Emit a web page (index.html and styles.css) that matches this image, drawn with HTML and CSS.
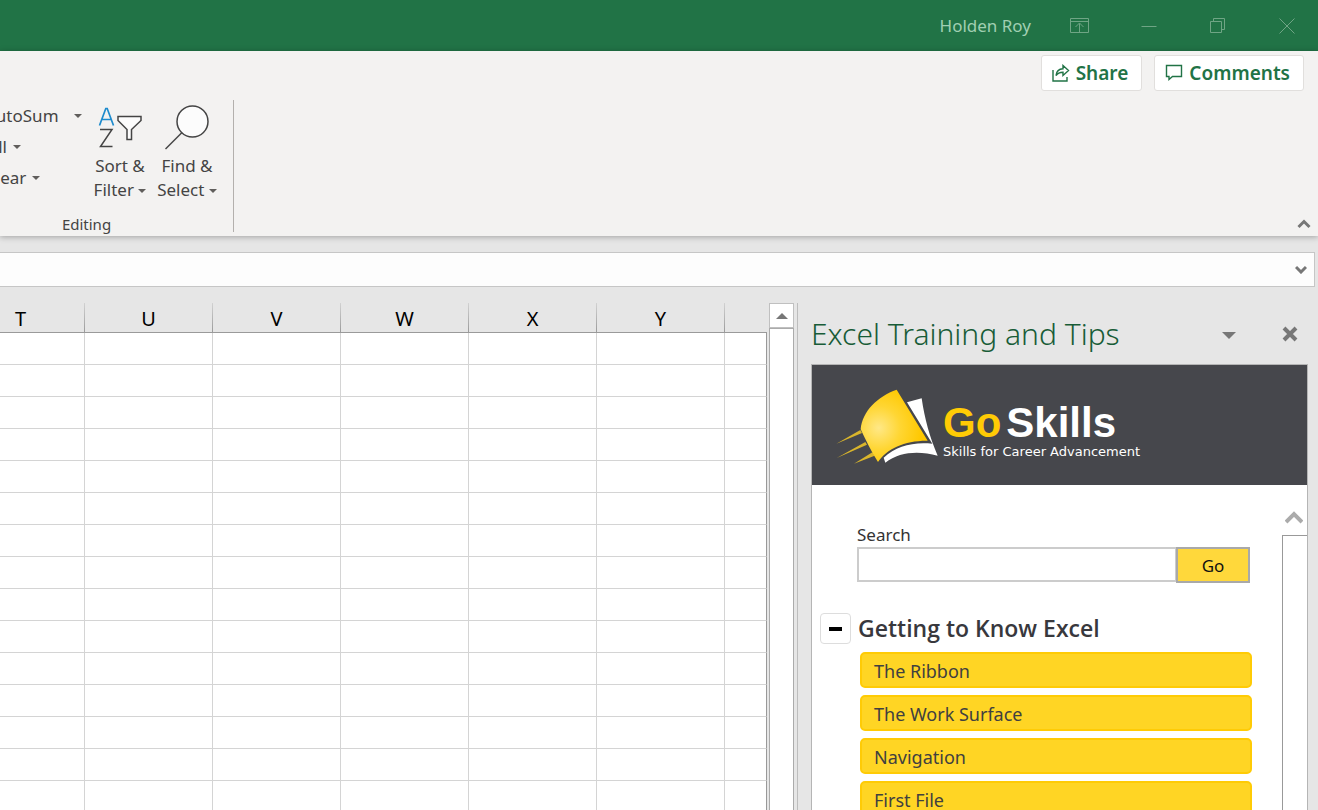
FILE: index.html
```
<!DOCTYPE html>
<html lang="en">
<head>
<meta charset="utf-8">
<title>Excel Training and Tips</title>
<link rel="stylesheet" href="styles.css">
</head>
<body>
<div class="app">
  <header class="titlebar">
    <span class="user">Holden Roy</span>
    <div class="window-controls">
      <button type="button" class="window-button" aria-label="Ribbon display options">
        <svg width="20" height="16" viewBox="0 0 20 16"><path d="M.5.5h18v14H.5zM.5 3.500h18M9.500 14V5.500M5.500 9l4-4 4 4"/></svg>
      </button>
      <button type="button" class="window-button" aria-label="Minimize">
        <svg width="16" height="16" viewBox="0 0 16 16"><path d="M.5 8.500h15"/></svg>
      </button>
      <button type="button" class="window-button" aria-label="Restore">
        <svg width="16" height="16" viewBox="0 0 16 16"><path d="M.5 3.500h11v11H.5zM3.500 3.500v-3h11v11h-3"/></svg>
      </button>
      <button type="button" class="window-button" aria-label="Close">
        <svg width="16" height="16" viewBox="0 0 16 16"><path d="M.5.5l15 15M15.500.5l-15 15"/></svg>
      </button>
    </div>
  </header>

  <section class="ribbon">
    <div class="ribbon-actions">
      <button type="button" class="action">
        <svg width="18" height="18" viewBox="0 0 18 18"><path d="M1 6v11h14v-4"/><path d="M4 11.500c.5-4.500 3-6.500 7-6.700V1.500l5.500 5-5.500 5V8.300c-3.500 0-5.500 1-7 3.200z"/></svg>
        Share
      </button>
      <button type="button" class="action">
        <svg width="18" height="18" viewBox="0 0 18 18"><path d="M1.500 1.500h15v11H7.500L4 15.500v-3H1.500z"/></svg>
        Comments
      </button>
    </div>
    <div class="ribbon-body">
      <div class="group">
        <div class="group-commands">
          <div class="small-commands">
            <button type="button" class="small-command wide">AutoSum <i class="caret"></i></button>
            <button type="button" class="small-command">Fill <i class="caret"></i></button>
            <button type="button" class="small-command">Clear <i class="caret"></i></button>
          </div>
          <button type="button" class="large-command">
            <svg width="44" height="50" viewBox="0 0 44 50">
              <path class="letter-a" d="M1.500 21.500L7.800 4.500h1.400L15.500 21.500M4 15.500h9"/>
              <path class="ink" d="M2 25.500h12L2.500 42.500H14.500"/>
              <path class="ink paper" d="M20 12.500h23v4L33.500 25.500v10H29v-10l-9-9z"/>
            </svg>
            <span>Sort &amp;<br>Filter <i class="caret"></i></span>
          </button>
          <button type="button" class="large-command">
            <svg width="44" height="50" viewBox="0 0 44 50">
              <circle class="ink paper" cx="27.500" cy="17.500" r="15.500"/>
              <path class="ink" d="M17 28.500L.5 45"/>
            </svg>
            <span>Find &amp;<br>Select <i class="caret"></i></span>
          </button>
        </div>
        <div class="group-name">Editing</div>
      </div>
      <button type="button" class="collapse" aria-label="Collapse the ribbon">
        <svg width="14" height="10" viewBox="0 0 14 10"><path d="M1.500 8L7 2.500 12.500 8"/></svg>
      </button>
    </div>
  </section>

  <div class="formula">
    <input type="text" class="formula-input" aria-label="Formula bar">
    <button type="button" class="formula-expand" aria-label="Expand formula bar">
      <svg width="12" height="9" viewBox="0 0 12 9"><path d="M1 2l5 5 5-5"/></svg>
    </button>
  </div>

  <main class="workspace">
    <div class="sheet">
      <table class="cells">
        <colgroup><col class="col"><col class="col"><col class="col"><col class="col"><col class="col"><col class="col"><col></colgroup>
        <thead><tr><th>T</th><th>U</th><th>V</th><th>W</th><th>X</th><th>Y</th><th></th></tr></thead>
        <tbody>
          <tr><td></td><td></td><td></td><td></td><td></td><td></td><td></td></tr>
          <tr><td></td><td></td><td></td><td></td><td></td><td></td><td></td></tr>
          <tr><td></td><td></td><td></td><td></td><td></td><td></td><td></td></tr>
          <tr><td></td><td></td><td></td><td></td><td></td><td></td><td></td></tr>
          <tr><td></td><td></td><td></td><td></td><td></td><td></td><td></td></tr>
          <tr><td></td><td></td><td></td><td></td><td></td><td></td><td></td></tr>
          <tr><td></td><td></td><td></td><td></td><td></td><td></td><td></td></tr>
          <tr><td></td><td></td><td></td><td></td><td></td><td></td><td></td></tr>
          <tr><td></td><td></td><td></td><td></td><td></td><td></td><td></td></tr>
          <tr><td></td><td></td><td></td><td></td><td></td><td></td><td></td></tr>
          <tr><td></td><td></td><td></td><td></td><td></td><td></td><td></td></tr>
          <tr><td></td><td></td><td></td><td></td><td></td><td></td><td></td></tr>
          <tr><td></td><td></td><td></td><td></td><td></td><td></td><td></td></tr>
          <tr><td></td><td></td><td></td><td></td><td></td><td></td><td></td></tr>
          <tr><td></td><td></td><td></td><td></td><td></td><td></td><td></td></tr>
        </tbody>
      </table>
    </div>
    <div class="sheet-scroll">
      <button type="button" class="scroll-up" aria-label="Scroll up"></button>
      <div class="scroll-thumb"></div>
    </div>

    <aside class="pane">
      <div class="pane-head">
        <h1 class="pane-title">Excel Training and Tips</h1>
        <button type="button" class="pane-button" aria-label="Task pane options"><i class="caret large"></i></button>
        <button type="button" class="pane-button" aria-label="Close pane">
          <svg width="16" height="16" viewBox="0 0 16 16"><path d="M2 2l12 12M14 2L2 14"/></svg>
        </button>
      </div>
      <div class="pane-frame">
        <div class="brand">
          <svg class="brand-mark" width="102" height="76" viewBox="78 84 306 228">
            <defs>
              <radialGradient id="cover" gradientUnits="userSpaceOnUse" cx="206" cy="204" r="130">
                <stop offset="0" stop-color="#ffe887"/><stop offset=".5" stop-color="#ffd633"/><stop offset="1" stop-color="#ffc800"/>
              </radialGradient>
            </defs>
            <path fill="#d9b52c" d="M79 251l72-41 5 9zM80 294l86-48 5 8zM132 311l55-34 7 10z"/>
            <path fill="url(#cover)" d="M260 89C203 109 157 153 152 208c14 30 31 66 52 98 26-40 82-65 149-64z"/>
            <path fill="#fff" d="M291 127l44-12c9 62 24 116 48 172-55-15-114-13-157 21l-5-15c38-35 88-48 146-42z"/>
          </svg>
          <div class="brand-text">
            <div class="wordmark"><span class="wordmark-go">Go</span><span>Skills</span></div>
            <div class="tagline">Skills for Career Advancement</div>
          </div>
        </div>
        <div class="pane-body">
          <div class="pane-content">
            <form class="search">
              <label class="search-label" for="search">Search</label>
              <div class="search-row">
                <input type="text" id="search" class="search-input">
                <button type="button" class="search-go">Go</button>
              </div>
            </form>
            <section class="topic">
              <div class="topic-head">
                <button type="button" class="topic-toggle" aria-label="Collapse section"></button>
                <h2 class="topic-title">Getting to Know Excel</h2>
              </div>
              <nav class="lessons">
                <a class="lesson" href="#ribbon">The Ribbon</a>
                <a class="lesson" href="#surface">The Work Surface</a>
                <a class="lesson" href="#navigation">Navigation</a>
                <a class="lesson" href="#file">First File</a>
              </nav>
            </section>
          </div>
          <div class="pane-scroll">
            <button type="button" class="pane-scroll-up" aria-label="Scroll pane up">
              <svg width="18" height="14" viewBox="0 0 18 14"><path d="M1 12L9 4l8 8"/></svg>
            </button>
            <div class="pane-thumb"></div>
          </div>
        </div>
      </div>
    </aside>
  </main>
</div>
</body>
</html>
```
FILE: styles.css
```
* { box-sizing: border-box; }

body {
  margin: 0;
  background: #e6e6e6;
  color: #444;
  font-family: "Noto Sans", "Open Sans", sans-serif;
  font-size: 17px;
}

button {
  margin: 0;
  padding: 0;
  border: 0;
  background: none;
  color: inherit;
  font: inherit;
}

svg { display: block; fill: none; }

.app {
  display: flex;
  flex-direction: column;
  height: 100vh;
  overflow: hidden;
}

/* Title bar */
.titlebar {
  display: flex;
  flex: none;
  align-items: center;
  justify-content: flex-end;
  gap: 26px;
  height: 51px;
  padding-right: 9px;
  background: #217346;
  color: #a0cfb2;
}
.window-controls { display: flex; gap: 24px; }
.window-button {
  display: flex;
  align-items: center;
  justify-content: center;
  width: 45px;
  height: 50px;
}
.window-button svg { stroke: #6fa585; }

/* Ribbon */
.ribbon {
  position: relative;
  z-index: 1;
  flex: none;
  padding-top: 4px;
  background: #f3f2f1;
  box-shadow: 0 1px 6px rgba(0, 0, 0, .3);
}
.ribbon-actions {
  display: flex;
  justify-content: flex-end;
  gap: 12px;
  padding-right: 14px;
}
.action {
  display: flex;
  align-items: center;
  gap: 6px;
  height: 36px;
  padding: 0 13px 0 10px;
  border: 1px solid #e1dfdd;
  border-radius: 3px;
  background: #fff;
  color: #217346;
  font-size: 19px;
  font-weight: 600;
}
.action svg { stroke: #217346; stroke-width: 1.4; }
.ribbon-body {
  display: flex;
  align-items: flex-end;
  justify-content: space-between;
  padding: 9px 7px 4px 0;
}
.group {
  width: 294px;
  margin-left: -60px;
  border-right: 1px solid #b3b0ad;
}
.group-commands { display: flex; height: 116px; }
.small-commands {
  display: flex;
  flex-direction: column;
  width: 148px;
  padding-left: 45px;
}
.small-command {
  display: flex;
  align-items: center;
  gap: 6px;
  height: 31px;
}
.small-command.wide { gap: 15px; }
.large-command {
  display: flex;
  flex-direction: column;
  align-items: center;
  width: 64px;
  line-height: 24px;
  white-space: nowrap;
}
.large-command + .large-command { margin-left: 3px; }
.large-command svg { margin-top: 4px; }
.ink { stroke: #444; stroke-width: 1.5; }
.paper { fill: #fcfcfc; }
.letter-a { stroke: #1e8bcd; stroke-width: 1.7; }
.caret {
  display: inline-block;
  flex: none;
  border: 4px solid transparent;
  border-top-color: #605e5c;
  border-bottom: 0;
  vertical-align: middle;
}
.caret.large {
  border-width: 7px;
  border-bottom: 0;
  border-top-color: #777;
}
.group-name {
  font-size: 15px;
  line-height: 16px;
  text-align: center;
}
.collapse svg { stroke: #777; stroke-width: 3; margin-bottom: 3px; }

/* Formula bar */
.formula {
  display: flex;
  flex: none;
  height: 35px;
  margin: 16px 3px 16px 0;
  border: 1px solid #c6c6c6;
  border-left: 0;
  background: #fdfdfd;
}
.formula-input {
  flex: 1;
  min-width: 0;
  border: 0;
  outline: 0;
  background: transparent;
}
.formula-expand { padding: 0 7px; }
.formula-expand svg { stroke: #777; stroke-width: 3; }

/* Worksheet */
.workspace { display: flex; flex: 1; min-height: 0; }
.sheet {
  flex: 1;
  min-width: 0;
  overflow: hidden;
}
.cells {
  width: calc(100% + 43px);
  margin-left: -43px;
  border-collapse: separate;
  border-spacing: 0;
  table-layout: fixed;
}
.col { width: 128px; }
.cells th {
  height: 30px;
  padding: 2px 0 0;
  border-right: 1px solid;
  border-bottom: 1px solid #999;
  border-image: linear-gradient(#d4d4d4, #999) 1;
  color: #000;
  font-size: 20px;
  font-weight: 400;
  line-height: 24px;
}
.cells th:last-child { border-right: 0; }
.cells td {
  height: 32px;
  padding: 0;
  border-right: 1px solid #d4d4d4;
  border-bottom: 1px solid #d4d4d4;
  background: #fff;
}
.cells td:last-child { border-right-color: #999; }
.sheet-scroll {
  display: flex;
  flex: none;
  flex-direction: column;
  width: 25px;
  margin: 0 3px 0 2px;
}
.scroll-up {
  display: flex;
  align-items: center;
  justify-content: center;
  height: 25px;
  border: 1px solid #c0c0c0;
  background: #fff;
}
.scroll-up::before {
  content: "";
  border: 6px solid transparent;
  border-top: 0;
  border-bottom-color: #777;
}
.scroll-thumb {
  flex: 1;
  border: 1px solid #ababab;
  border-bottom: 0;
  background: #fff;
}

/* Task pane */
.pane {
  display: flex;
  flex: none;
  flex-direction: column;
  width: 521px;
  padding: 0 10px 0 13px;
  border-left: 1px solid #bdbdbd;
}
.pane-head {
  display: flex;
  flex: none;
  align-items: center;
  height: 61px;
  padding-right: 10px;
}
.pane-title {
  flex: 1;
  margin: 0;
  color: #185c37;
  font-size: 30px;
  font-weight: 300;
  line-height: 40px;
  white-space: nowrap;
}
.pane-button { margin-left: 46px; }
.pane-button svg { stroke: #777; stroke-width: 4; }
.pane-frame {
  display: flex;
  flex: 1;
  flex-direction: column;
  min-height: 0;
  border: 1px solid #b5b5b5;
  border-bottom: 0;
  background: #fff;
}
.brand {
  display: flex;
  flex: none;
  gap: 5px;
  height: 120px;
  padding: 23px 0 0 24px;
  background: #46474c;
}
.brand-mark { flex: none; }
.brand-text { padding-top: 13px; color: #fff; white-space: nowrap; }
.wordmark {
  display: flex;
  gap: 5px;
  font-family: "Liberation Sans", Arial, sans-serif;
  font-size: 42px;
  font-weight: 700;
  line-height: 44px;
}
.wordmark-go { color: #ffcb05; }
.tagline {
  font-family: "DejaVu Sans", Verdana, sans-serif;
  font-size: 13px;
  line-height: 14px;
}
.pane-body { display: flex; flex: 1; min-height: 0; }
.pane-content { flex: 1; min-width: 0; overflow: hidden; padding: 38px 30px 0 8px; }
.search { padding: 0 2px 0 37px; }
.search-label {
  display: block;
  color: #333;
  line-height: 24px;
}
.search-row { display: flex; align-items: flex-start; }
.search-input {
  flex: 1;
  min-width: 0;
  height: 35px;
  border: 2px solid #ccc;
  border-right-width: 1px;
  outline: 0;
  background: #fff;
}
.search-go {
  width: 74px;
  height: 36px;
  border: 2px solid #a9a9a9;
  background: #ffd83b;
  color: #111;
}
.topic-head {
  display: flex;
  align-items: center;
  gap: 7px;
  margin: 30px 0 8px;
}
.topic-toggle {
  display: flex;
  flex: none;
  align-items: center;
  justify-content: center;
  width: 31px;
  height: 31px;
  border: 1px solid #ddd;
  border-radius: 4px;
  background: #fff;
}
.topic-toggle::before {
  content: "";
  width: 13px;
  height: 4px;
  background: #000;
}
.topic-title {
  margin: 0;
  color: #38383d;
  font-family: "Open Sans", "Noto Sans", sans-serif;
  font-size: 23px;
  font-weight: 600;
  line-height: 31px;
  white-space: nowrap;
}
.lessons {
  display: flex;
  flex-direction: column;
  gap: 7px;
  padding-left: 40px;
}
.lesson {
  flex: none;
  height: 36px;
  padding: 0 12px;
  border: 2px solid #ffcb05;
  border-radius: 5px;
  background: #ffd524;
  color: #404040;
  font-size: 18px;
  line-height: 34px;
  text-decoration: none;
}
.pane-scroll {
  display: flex;
  flex: none;
  flex-direction: column;
  width: 25px;
  padding-top: 24px;
}
.pane-scroll-up { height: 26px; padding-left: 3px; }
.pane-scroll-up svg { stroke: #ababab; stroke-width: 4; margin-bottom: 10px; }
.pane-thumb {
  flex: 1;
  border: 1px solid #999;
  border-right: 0;
  border-bottom: 0;
  background: #fff;
}
```
